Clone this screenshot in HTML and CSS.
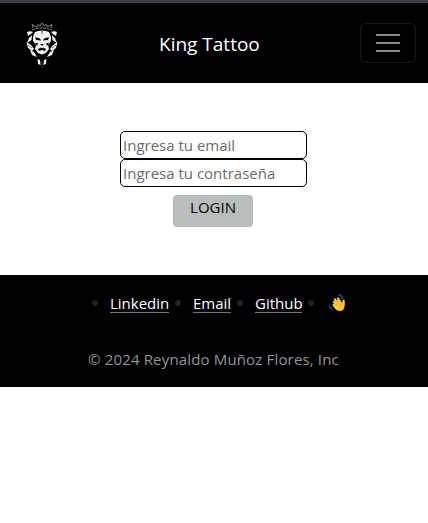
FILE: index.html
```html
<!DOCTYPE html>
<html lang="es">
<head>
<meta charset="utf-8">
<title>King Tattoo</title>
<link rel="stylesheet" href="styles.css">
</head>
<body>
<header class="navbar">
  <svg class="logo" viewBox="0 0 44 56" aria-hidden="true">
    <g fill="none" stroke="#888" stroke-width="1">
      <path d="M12 12Q22 8 32 12" stroke-dasharray="3 .8"/>
      <path d="M13 10L12 6.500L17 9L18 6.500L20 8L22 5L24 8L26 6.500L27 9L32 6.500L31 10"/>
    </g>
    <path fill="#f2f2f2" d="M15 14Q18 12.500 22 12.500Q26 12.500 29 14L31 19L31 23L28 27L29 31L26 35L22 36.500L18 35L15 31L16 27L13 23L13 19ZM7 14Q10 12.500 13 14L11 16L8 18ZM37 14Q34 12.500 31 14L33 16L36 18ZM12 17L11.500 22L7 25L9 20ZM32 17L32.500 22L37 25L35 20ZM6.500 24L11 27L14 31L12 33L8 30ZM37.500 24L33 27L30 31L32 33L36 30ZM10 32L14 34L17 39L12 37ZM34 32L30 34L27 39L32 37ZM17.500 41L20 42L20.500 47L18 46ZM26.500 41L24 42L23.500 47L26 46Z"/>
    <path d="M15 19L20 20.500L21 22.500L16 22ZM29 19L24 20.500L23 22.500L28 22ZM20 26L24 26L22 28ZM18 31L21 29.500L22 30.500L23 29.500L26 31L25 33L22 32L19 33ZM21.500 13L22 18L22.500 13ZM15 25L18 25L17 28ZM29 25L26 25L27 28Z"/>
    <path d="M22 43V50M8 27L12 30M36 27L32 30" stroke="#555" stroke-width=".8"/>
  </svg>
  <h1 class="brand">King Tattoo</h1>
  <button class="toggler" aria-label="Menu">
    <svg width="30" height="30" viewBox="0 0 30 30"><path d="M3 7H27M3 15H27M3 23H27" stroke="#8c8c8c" stroke-width="2"/></svg>
  </button>
</header>
<main class="login">
  <input class="field email" type="text" placeholder="Ingresa tu email">
  <input class="field password" type="text" placeholder="Ingresa tu contraseña">
  <button class="submit">LOGIN</button>
</main>
<footer class="footer">
  <ul class="links">
    <li><a class="linkedin" href="#">Linkedin</a></li>
    <li><a class="mail" href="#">Email</a></li>
    <li><a class="github" href="#">Github</a></li>
    <li><svg class="wave" viewBox="0 0 18 18" aria-hidden="true">
      <path d="M10 1Q14 1 14 5M12 .8Q15 2 15 5M1 11Q2 14 5 14M1 13Q3 16 6 16" fill="none" stroke="#28477f" stroke-width="1.300" stroke-dasharray="2 .7"/>
      <path d="M6 8L10 13M7 5.500L11 11M10 4.500L13 10M5.500 11L9 15M15.500 6.500V11" stroke="#ffc83d" stroke-width="2.200" stroke-linecap="round"/>
      <path d="M7 7L12 6L14 9L16.500 7V12Q16 17 12 17Q9 17 6 13Z" fill="#ffc83d"/>
      <path d="M8 7L11 10M7 9.500L9 12M12.500 12Q12.500 9 15 9" fill="none" stroke="#d99b2b" stroke-width=".6"/>
    </svg></li>
  </ul>
  <p class="copyright">© 2024 Reynaldo Muñoz Flores, Inc</p>
</footer>
</body>
</html>
```
FILE: styles.css
```css
* { box-sizing: border-box; }
body {
  margin: 0;
  background: #fff;
  font: 15px/24px "Open Sans", "Noto Sans", sans-serif;
}
.navbar {
  display: flex;
  align-items: center;
  height: 83px;
  padding: 0 12px 0 20px;
  border-top: 3px solid #3b3e44;
  background: #000;
}
.logo { width: 44px; height: 56px; margin-top: 6px; }
.brand {
  margin: 2px 0 0 95px;
  color: #fff;
  font-size: 19px;
  font-weight: 400;
  line-height: 30px;
  white-space: nowrap;
}
.toggler {
  display: flex;
  align-items: center;
  justify-content: center;
  width: 56px;
  height: 40px;
  margin-left: auto;
  padding: 0;
  border: 1px solid #1a1a1a;
  border-radius: 6px;
  background: transparent;
}
.login {
  display: flex;
  flex-direction: column;
  align-items: center;
  height: 192px;
  padding: 48px 1px 0 0;
}
.field {
  width: 187px;
  height: 28px;
  padding: 1px 2px;
  border: 1px solid #000;
  border-radius: 5px;
  background: #fff;
  font: inherit;
}
.field::placeholder { color: #6c6c6c; opacity: 1; }
.submit {
  width: 80px;
  height: 32px;
  margin: 8px 1px 0 0;
  padding: 0 0 8px;
  border: 0;
  border-radius: 4px;
  background: #b9bebd;
  color: #000;
  font: inherit;
}
.footer {
  height: 112px;
  padding-top: 16px;
  background: #000;
}
.links {
  display: flex;
  margin: 0;
  padding: 0 0 0 92px;
  list-style: none;
}
.links li { display: flex; align-items: center; height: 24px; }
.links li::before {
  content: "";
  width: 6px;
  height: 6px;
  margin-right: 12px;
  border-radius: 50%;
  background: #212529;
}
.links a {
  height: 21px;
  margin: 0 6px 1px 0;
  border-bottom: 1px solid #777;
  color: #fff;
  line-height: 22px;
  text-decoration: none;
}
.linkedin { width: 59px; }
.mail { width: 38px; }
.github { width: 47px; }
.wave { width: 18px; height: 18px; margin-left: 2px; }
.copyright {
  margin: 32px 0 0 88px;
  color: #939496;
  letter-spacing: .16px;
  white-space: nowrap;
}
```
